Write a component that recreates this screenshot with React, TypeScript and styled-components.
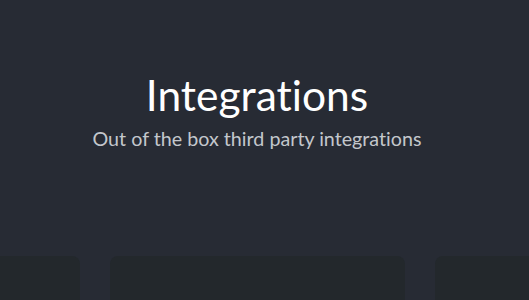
import React from 'react'
import styled, { createGlobalStyle } from 'styled-components'

const GlobalStyle = createGlobalStyle`
  html, body {
    margin: 0;
    padding: 0;
    background: #272b34;
  }
  body {
    font-family: Lato, "Noto Sans", sans-serif;
    font-variant-ligatures: none;
  }
`

const cards = ['left', 'center', 'right']

const App = () => {
  return (
    <Page>
      <GlobalStyle />
      <Header>
        <Title>Integrations</Title>
        <Subtitle>Out of the box third party integrations</Subtitle>
      </Header>
      <Track>
        {cards.map((c) => (
          <Card key={c} />
        ))}
      </Track>
    </Page>
  )
}

export default App

const Page = styled.div`
  width: 100%;
  height: 300px;
  overflow: hidden;
  background: #272b34;
`

const Header = styled.div`
  display: flex;
  flex-direction: column;
  align-items: center;
  padding: 70px 15px 0 0;
`

const Title = styled.h1`
  margin: 0;
  font-size: 42.5px;
  font-weight: 400;
  line-height: 50px;
  color: #ffffff;
`

const Subtitle = styled.p`
  margin: 6px 0 0;
  font-size: 19.7px;
  font-weight: 400;
  line-height: 26px;
  color: #c3c7cc;
`

const Track = styled.div`
  display: flex;
  gap: 30px;
  margin-top: 104px;
  margin-left: -215px;
`

const Card = styled.div`
  flex: 0 0 295px;
  height: 120px;
  border-radius: 8px;
  background: #23282c;
`
